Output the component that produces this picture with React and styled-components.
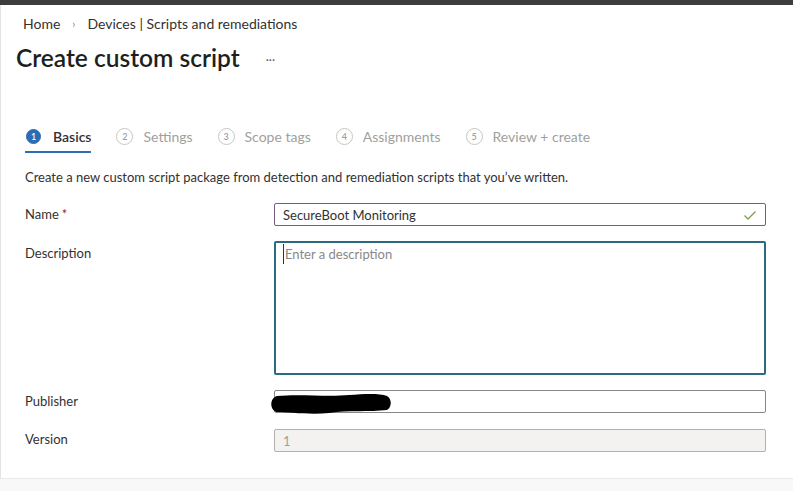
import styled, { createGlobalStyle } from "styled-components";

const GlobalStyle = createGlobalStyle`
  html, body {
    margin: 0;
    padding: 0;
    background: #f8f8f8;
  }
  body {
    font-family: Lato, "Open Sans", sans-serif;
    color: #323130;
  }
`;

const TopBar = styled.div`
  height: 5px;
  background: #3d3d3d;
`;

const Page = styled.div`
  background: #fff;
  border-left: 1px solid #e6e4e2;
  border-bottom: 1px solid #ebe9e7;
  height: 474px;
  box-sizing: border-box;
`;

const Breadcrumb = styled.nav`
  display: flex;
  align-items: center;
  gap: 10px;
  padding: 9px 0 0 22px;
  font-size: 14px;
  line-height: 20px;
  color: #323130;
`;

const Crumb = styled.span`
  white-space: nowrap;
`;

const Chevron = styled.span`
  font-size: 11px;
  color: #8a8886;
  padding: 0 2px;
`;

const TitleRow = styled.div`
  display: flex;
  align-items: center;
  gap: 26px;
  margin-top: 8px;
  padding-left: 15px;
`;

const Title = styled.h1`
  margin: 0;
  font-size: 24.5px;
  line-height: 32px;
  font-weight: 600;
  color: #201f1e;
`;

const More = styled.span`
  font-size: 12px;
  color: #605e5c;
  padding-top: 2px;
`;

const Tabs = styled.div`
  display: flex;
  gap: 25px;
  margin-top: 48px;
  padding-left: 24px;
`;

const Tab = styled.div`
  display: flex;
  align-items: center;
  gap: ${(p) => (p.$active ? "12px" : "10px")};
  height: 29px;
  border-bottom: 2px solid ${(p) => (p.$active ? "#2a6db5" : "transparent")};
  font-size: 14px;
  font-weight: ${(p) => (p.$active ? 600 : 400)};
  color: ${(p) => (p.$active ? "#323130" : "#a19f9d")};
`;

const StepNum = styled.span`
  display: inline-flex;
  align-items: center;
  justify-content: center;
  box-sizing: border-box;
  width: ${(p) => (p.$active ? "15px" : "17px")};
  height: ${(p) => (p.$active ? "15px" : "17px")};
  border-radius: 50%;
  font-size: 9px;
  font-weight: 600;
  background: ${(p) => (p.$active ? "#2a6db5" : "transparent")};
  color: ${(p) => (p.$active ? "#fff" : "#a19f9d")};
  border: 1px solid ${(p) => (p.$active ? "#2a6db5" : "#c8c6c4")};
  margin-left: ${(p) => (p.$active ? "1px" : "0")};
`;

const Intro = styled.p`
  margin: 14px 0 0 24px;
  font-size: 13px;
  line-height: 20px;
  color: #323130;
`;

const Form = styled.div`
  display: grid;
  grid-template-columns: 249px 492px;
  row-gap: 15px;
  padding: 16px 0 0 24px;
  align-items: start;
`;

const Label = styled.label`
  font-size: 13px;
  line-height: 23px;
  color: #323130;
  padding-top: ${(p) => (p.$top ? "1px" : "0")};
`;

const Required = styled.span`
  color: #a4262c;
  margin-left: 3px;
`;

const Field = styled.div`
  position: relative;
  box-sizing: border-box;
  height: ${(p) => p.$height || "23px"};
  border: ${(p) => p.$bw || "1px"} solid ${(p) => p.$border || "#8a8886"};
  border-radius: 2px;
  background: ${(p) => p.$bg || "#fff"};
  display: flex;
  align-items: ${(p) => (p.$multi ? "flex-start" : "center")};
  padding: ${(p) => (p.$multi ? "1px 8px" : "0 8px")};
  margin-top: ${(p) => p.$shift || "0"};
  font-size: 13px;
  line-height: 20px;
  color: ${(p) => p.$color || "#323130"};
`;

const Value = styled.span`
  flex: 1;
`;

const Placeholder = styled.span`
  color: #8a8886;
  border-left: 1px solid #323130;
  padding-left: 1px;
  margin-left: -1px;
`;

const Redaction = styled.svg`
  position: absolute;
  left: -6px;
  top: 2px;
`;

const steps = [
  { n: 1, label: "Basics", active: true },
  { n: 2, label: "Settings" },
  { n: 3, label: "Scope tags" },
  { n: 4, label: "Assignments" },
  { n: 5, label: "Review + create" },
];

const Check = () => (
  <svg width="14" height="12" viewBox="0 0 14 12">
    <path d="M1.5 6.5 L5 10 L12.5 2.5" fill="none" stroke="#7ea04d" strokeWidth="1.3" />
  </svg>
);

export default function App() {
  return (
    <>
      <GlobalStyle />
      <TopBar />
      <Page>
        <Breadcrumb>
          <Crumb>Home</Crumb>
          <Chevron>›</Chevron>
          <Crumb>Devices | Scripts and remediations</Crumb>
        </Breadcrumb>
        <TitleRow>
          <Title>Create custom script</Title>
          <More>···</More>
        </TitleRow>

        <Tabs>
          {steps.map((s) => (
            <Tab key={s.n} $active={s.active}>
              <StepNum $active={s.active}>{s.n}</StepNum>
              {s.label}
            </Tab>
          ))}
        </Tabs>

        <Intro>
          Create a new custom script package from detection and remediation scripts that you’ve written.
        </Intro>

        <Form>
          <Label>
            Name<Required>*</Required>
          </Label>
          <Field $border="#7b5a84">
            <Value>SecureBoot Monitoring</Value>
            <Check />
          </Field>

          <Label $top>Description</Label>
          <Field $multi $height="134px" $bw="2px" $border="#2b6b80">
            <Placeholder>Enter a description</Placeholder>
          </Field>

          <Label>Publisher</Label>
          <Field>
            <Redaction width="124" height="22" viewBox="0 0 124 22">
              <path
                d="M8 3 C30 1 60 4 80 2 C95 1 110 0 118 3 C123 6 123 14 118 17 C100 19 80 17 60 20 C40 22 20 19 8 19 C1 18 0 5 8 3 Z"
                fill="#000"
              />
            </Redaction>
          </Field>

          <Label>Version</Label>
          <Field $bg="#f3f2f1" $border="#b3b0ad" $color="#a19f9d" $shift="1px">
            <Value>1</Value>
          </Field>
        </Form>
      </Page>
    </>
  );
}
